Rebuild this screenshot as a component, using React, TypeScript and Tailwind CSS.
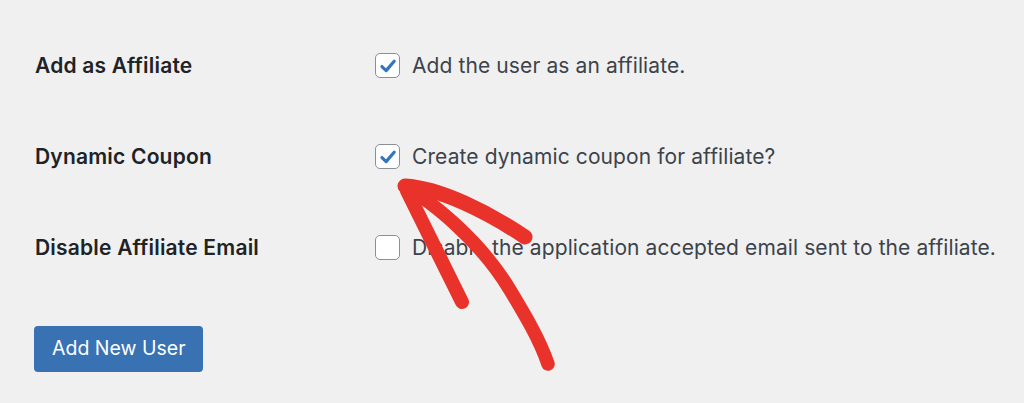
import React from "react";

const Check = () => (
  <svg viewBox="0 0 20 20" className="w-[22px] h-[22px]" fill="none">
    <path d="M4.5 10.5 L8.3 14.2 L15.6 5.6" stroke="#3476bd" strokeWidth="2.9" strokeLinecap="round" strokeLinejoin="round" />
  </svg>
);

const Box = ({ checked }: { checked: boolean }) => (
  <span className="w-[25px] h-[25px] rounded-[5px] border-[1.5px] border-[#8c8f94] bg-white flex items-center justify-center shrink-0">
    {checked && <Check />}
  </span>
);

const Row = ({ label, text, checked }: { label: string; text: string; checked: boolean }) => (
  <div className="flex items-center h-[91px]">
    <div className="w-[340px] text-[21px] font-semibold tracking-[0.2px] text-[#1d2327]">{label}</div>
    <div className="flex items-center gap-[12px]">
      <Box checked={checked} />
      <span className="text-[21px] tracking-[0.1px] text-[#3c434a]">{text}</span>
    </div>
  </div>
);

export default function App() {
  return (
    <div
      className="relative w-[1024px] h-[403px] bg-[#f0f0f1] overflow-hidden"
      style={{ fontFamily: "Inter, 'Noto Sans', sans-serif" }}
    >
      <div className="pl-[35px] pt-[20px]">
        <Row label="Add as Affiliate" text="Add the user as an affiliate." checked />
        <Row label="Dynamic Coupon" text="Create dynamic coupon for affiliate?" checked />
        <Row label="Disable Affiliate Email" text="Disable the application accepted email sent to the affiliate." checked={false} />
        <div className="pt-[33px] -ml-px">
          <button className="h-[46px] px-[18px] rounded-[4px] bg-[#3872b2] text-white text-[19.5px]">Add New User</button>
        </div>
      </div>
      <svg className="absolute left-0 top-0 pointer-events-none" width="1024" height="403" viewBox="0 0 1024 403" fill="none">
        <path d="M406 188 C430 200 480 240 510 290 C525 315 540 340 548 364" stroke="#e8322a" strokeWidth="13.5" strokeLinecap="round" />
        <path d="M407 191 L462 302" stroke="#e8322a" strokeWidth="14" strokeLinecap="round" />
        <path d="M405 186 C440 188 488 212 525 237" stroke="#e8322a" strokeWidth="15" strokeLinecap="round" />
      </svg>
    </div>
  );
}
